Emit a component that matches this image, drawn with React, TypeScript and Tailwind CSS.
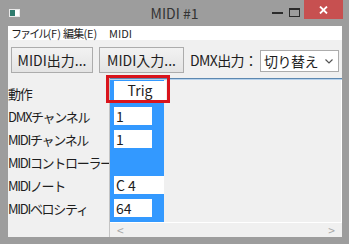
const LABELS = ['動作', 'DMXチャンネル', 'MIDIチャンネル', 'MIDIコントローラー', 'MIDIノート', 'MIDIベロシティ'];

const VALUES: { text: string; width: string }[] = [
  { text: '1', width: 'w-[38px]' },
  { text: '1', width: 'w-[38px]' },
  { text: '', width: '' },
  { text: 'C 4', width: 'w-[50px]' },
  { text: '64', width: 'w-[38px]' },
];

export default function App() {
  return (
    <div className="relative flex h-[244px] w-[349px] flex-col overflow-hidden bg-[#9d9d9d] font-['Noto_Sans_CJK_JP',sans-serif] text-[#1e1e1e]">
      {/* title bar */}
      <div className="grid h-[26px] grid-cols-[1fr_auto_1fr] items-start">
        <div className="ml-[9px] mt-[9px] flex h-[8px] w-[11px] border border-[#e8e8e8] bg-white">
          <div className="h-full w-[5px] bg-[#2f7c6e]" />
        </div>
        <div className="pt-[3px] text-[14px] leading-[20px] text-[#333]">MIDI #1</div>
        <div className="flex items-start justify-end">
          <div className="mt-[12px] h-[2px] w-[11px] bg-[#2b2b2b]" />
          <div className="ml-[6px] mt-[8px] h-[9px] w-[11px] border border-t-2 border-[#2b2b2b]" />
          <div className="ml-[4px] mr-[6px] flex h-[19px] w-[39px] items-center justify-center bg-[#c75050]">
            <svg width="9" height="8" viewBox="0 0 9 8">
              <path d="M1 0.5 L8 7.5 M8 0.5 L1 7.5" stroke="white" strokeWidth="1.8" />
            </svg>
          </div>
        </div>
      </div>

      {/* client */}
      <div className="mb-[7px] ml-[8px] mr-[7px] flex flex-1 flex-col bg-[#f0f0f0]">
        <div className="flex h-[14px] items-center whitespace-nowrap bg-white pl-[3px] text-[11px] leading-[14px]">
          <span className="w-[52px] shrink-0">
            <span className="tracking-[-1.9px]">ファイル</span>(F)
          </span>
          <span className="w-[46px] shrink-0">
            <span className="tracking-[-0.8px]">編集</span>(E)
          </span>
          <span>MIDI</span>
        </div>

        <div className="flex h-[37px] items-start">
          <button className="ml-[3px] mt-[7px] h-[26px] w-[82px] border border-[#acacac] bg-gradient-to-b from-[#f2f2f2] to-[#e4e4e4] text-[14px] leading-[22px]">
            MIDI出力...
          </button>
          <button className="ml-[6px] mt-[7px] h-[26px] w-[85px] border border-[#acacac] bg-gradient-to-b from-[#f2f2f2] to-[#e4e4e4] text-[14px] leading-[22px]">
            MIDI入力...
          </button>
          <span className="ml-[6px] mt-[9px] w-[70px] text-[14px] leading-[22px] tracking-[-0.6px]">DMX出力：</span>
          <div className="mt-[10px] flex h-[22px] w-[79px] items-center justify-between border border-[#acacac] bg-white pl-[3px] pr-[5px] text-[14px]">
            <span className="tracking-[-0.5px]">切り替え</span>
            <svg width="8" height="5" viewBox="0 0 8 5">
              <path d="M0.5 0.5 L4 4 L7.5 0.5" stroke="#555" fill="none" strokeWidth="1.2" />
            </svg>
          </div>
        </div>

        <div className="flex flex-1">
          <div className="flex w-[101px] flex-col overflow-hidden whitespace-nowrap pt-[5px] text-[13px] tracking-[-1.3px]">
            {LABELS.map((label) => (
              <div key={label} className="flex h-[23px] items-center">
                {label}
              </div>
            ))}
          </div>
          <div className="w-[1px] bg-[#c4c4c4]" />
          <div className="flex flex-1 flex-col">
            <div className="mt-[1px] h-[1px] bg-[#5d88b0]" />
            <div className="h-[1px] bg-[#b7d2ec]" />
            <div className="flex flex-1">
              <div className="flex w-[54px] flex-col bg-[#3399ff] pt-[1px] text-[14px]">
                <div className="h-[23px]">
                  <div className="ml-[4px] h-[19px] w-[52px] bg-white text-center leading-[19px]">Trig</div>
                </div>
                {VALUES.map((v, i) => (
                  <div key={i} className="h-[23px]">
                    {v.text && (
                      <div className={`ml-[4px] mt-[3px] h-[18px] ${v.width} bg-white pl-[2px] leading-[18px]`}>
                        {v.text}
                      </div>
                    )}
                  </div>
                ))}
              </div>
              <div className="flex-1 border-r border-white" />
            </div>
            <div className="flex h-[15px] items-center justify-between border-t border-white px-[7px] text-[12px] leading-[14px] text-[#a8a8a8]">
              <span>&lt;</span>
              <span>&gt;</span>
            </div>
          </div>
        </div>
      </div>

      <div className="absolute left-[106px] top-[75px] h-[28px] w-[64px] border-[3px] border-[#d9141c]" />
    </div>
  );
}
